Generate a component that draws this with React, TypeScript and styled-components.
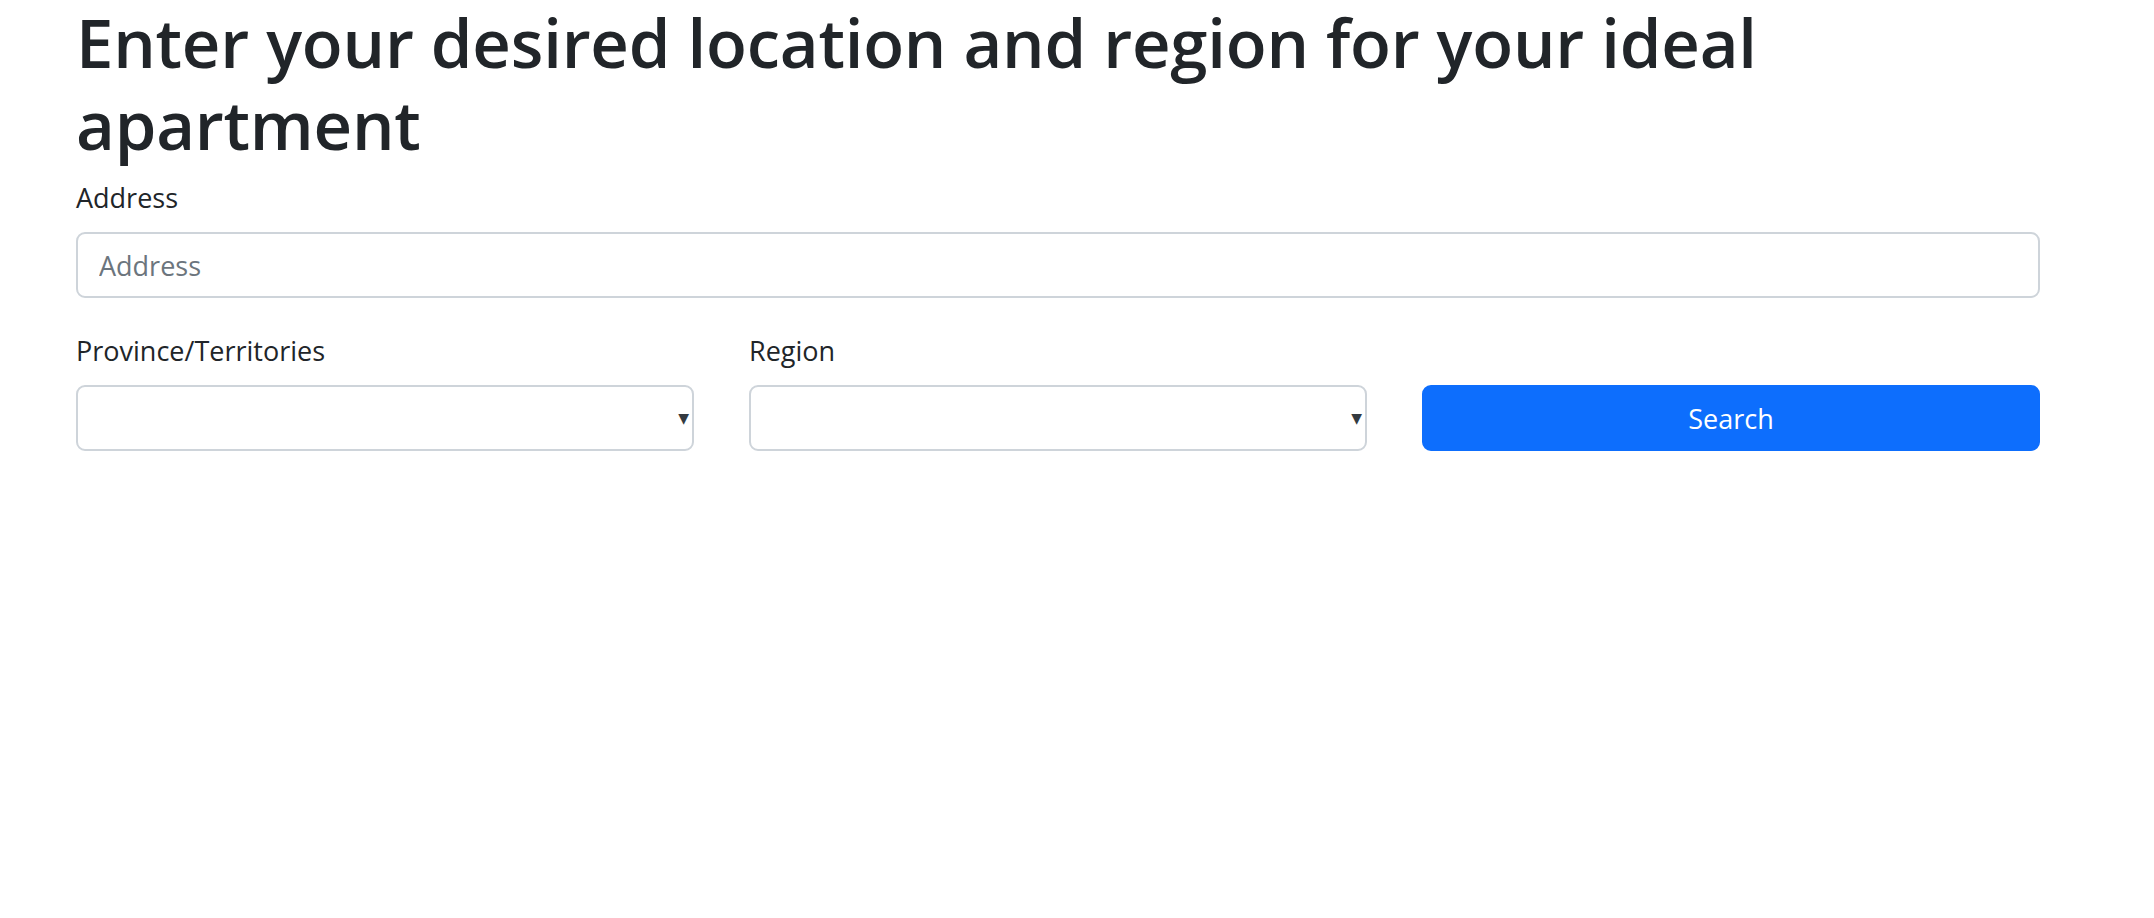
import styled, { createGlobalStyle } from "styled-components";

const GlobalStyle = createGlobalStyle`
  body {
    margin: 0;
    background: #ffffff;
    color: #212529;
    font-family: "Open Sans", "Noto Sans", Arial, sans-serif;
  }
  * {
    box-sizing: border-box;
  }
`;

export default function App() {
  return (
    <>
      <GlobalStyle />
      <Page>
        <Heading>Enter your desired location and region for your ideal apartment</Heading>
        <Field>
          <Label htmlFor="address">Address</Label>
          <Input id="address" type="text" placeholder="Address" />
        </Field>
        <Row>
          <Field>
            <Label htmlFor="province">Province/Territories</Label>
            <SelectWrap>
              <Select id="province" defaultValue="">
                <option value=""></option>
              </Select>
              <Caret>▼</Caret>
            </SelectWrap>
          </Field>
          <Field>
            <Label htmlFor="region">Region</Label>
            <SelectWrap>
              <Select id="region" defaultValue="">
                <option value=""></option>
              </Select>
              <Caret>▼</Caret>
            </SelectWrap>
          </Field>
          <ButtonCell>
            <SearchButton type="button">Search</SearchButton>
          </ButtonCell>
        </Row>
      </Page>
    </>
  );
}

const Page = styled.div`
  width: 1964px;
  margin-left: 76px;
  padding-top: 1px;
  display: flex;
  flex-direction: column;
`;

const Heading = styled.h1`
  margin: 0 0 12px;
  font-size: 67px;
  line-height: 82px;
  font-weight: 600;
  letter-spacing: -0.2px;
  color: #212529;
`;

const Field = styled.div`
  display: flex;
  flex-direction: column;
`;

const Label = styled.label`
  font-size: 27px;
  line-height: 41px;
  color: #212529;
  margin-bottom: 14px;
`;

const Input = styled.input`
  height: 66px;
  padding: 0 21px;
  font-family: inherit;
  font-size: 27px;
  color: #212529;
  border: 2px solid #ced4da;
  border-radius: 9px;
  outline: none;

  &::placeholder {
    color: #6c757d;
  }
`;

const Row = styled.div`
  display: grid;
  grid-template-columns: repeat(3, 1fr);
  column-gap: 55px;
  margin-top: 32px;
`;

const SelectWrap = styled.div`
  position: relative;
`;

const Select = styled.select`
  width: 100%;
  height: 66px;
  padding: 0 21px;
  font-family: inherit;
  font-size: 27px;
  color: #212529;
  background: #ffffff;
  border: 2px solid #ced4da;
  border-radius: 9px;
  appearance: none;
  outline: none;
`;

const Caret = styled.span`
  position: absolute;
  right: 5px;
  top: 50%;
  transform: translateY(-50%);
  font-size: 14px;
  line-height: 1;
  color: #343a40;
  pointer-events: none;
  font-family: "DejaVu Sans", sans-serif;
`;

const ButtonCell = styled.div`
  display: flex;
  align-items: flex-end;
`;

const SearchButton = styled.button`
  width: 100%;
  height: 66px;
  font-family: inherit;
  font-size: 27px;
  color: #ffffff;
  background: #0d6efd;
  border: 2px solid #0d6efd;
  border-radius: 9px;
  cursor: pointer;
`;
